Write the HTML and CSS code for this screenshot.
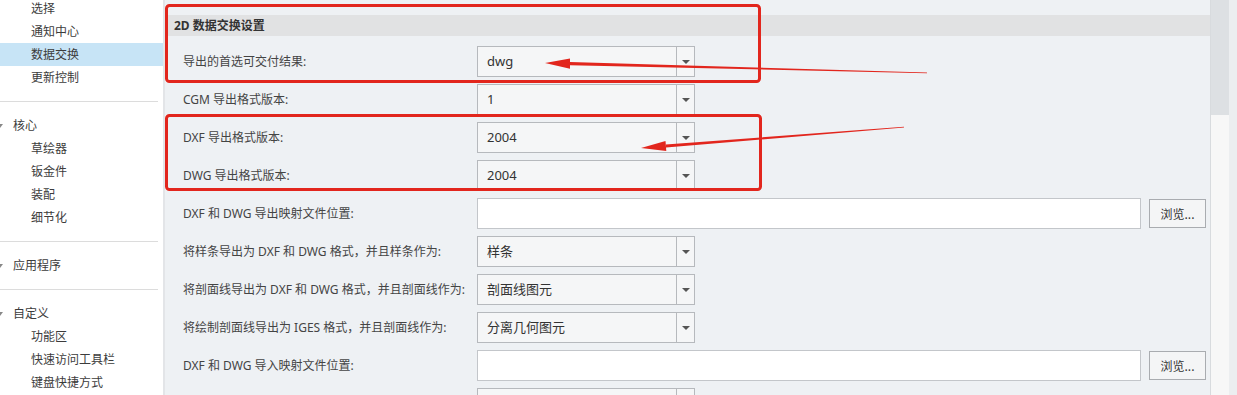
FILE: index.html
```html
<!DOCTYPE html>
<html lang="zh-CN">

<head>
    <meta charset="UTF-8">
    <title>选项 - 数据交换</title>
    <link rel="stylesheet" href="styles.css">
</head>

<body>
    <div class="wrapper">
        <div class="sidebar">
            <div class="group">
                <div class="item child">选择</div>
                <div class="item child">通知中心</div>
                <div class="item child active">数据交换</div>
                <div class="item child">更新控制</div>
            </div>
            <div class="sep"></div>
            <div class="group">
                <div class="item head">核心</div>
                <div class="item child">草绘器</div>
                <div class="item child">钣金件</div>
                <div class="item child">装配</div>
                <div class="item child">细节化</div>
            </div>
            <div class="sep"></div>
            <div class="group">
                <div class="item head">应用程序</div>
            </div>
            <div class="sep"></div>
            <div class="group">
                <div class="item head">自定义</div>
                <div class="item child">功能区</div>
                <div class="item child">快速访问工具栏</div>
                <div class="item child">键盘快捷方式</div>
            </div>
        </div>

        <div class="main">
            <div class="section-title">2D 数据交换设置</div>

            <div class="row">
                <div class="label">导出的首选可交付结果:</div>
                <div class="select"><span class="value">dwg</span><span class="arrow"></span></div>
            </div>
            <div class="row">
                <div class="label">CGM 导出格式版本:</div>
                <div class="select"><span class="value">1</span><span class="arrow"></span></div>
            </div>
            <div class="row">
                <div class="label">DXF 导出格式版本:</div>
                <div class="select"><span class="value">2004</span><span class="arrow"></span></div>
            </div>
            <div class="row">
                <div class="label">DWG 导出格式版本:</div>
                <div class="select"><span class="value">2004</span><span class="arrow"></span></div>
            </div>
            <div class="row">
                <div class="label">DXF 和 DWG 导出映射文件位置:</div>
                <div class="textbox"></div>
                <button class="browse">浏览...</button>
            </div>
            <div class="row">
                <div class="label">将样条导出为 DXF 和 DWG 格式，并且样条作为:</div>
                <div class="select"><span class="value">样条</span><span class="arrow"></span></div>
            </div>
            <div class="row">
                <div class="label">将剖面线导出为 DXF 和 DWG 格式，并且剖面线作为:</div>
                <div class="select"><span class="value">剖面线图元</span><span class="arrow"></span></div>
            </div>
            <div class="row">
                <div class="label">将绘制剖面线导出为 IGES 格式，并且剖面线作为:</div>
                <div class="select"><span class="value">分离几何图元</span><span class="arrow"></span></div>
            </div>
            <div class="row">
                <div class="label">DXF 和 DWG 导入映射文件位置:</div>
                <div class="textbox"></div>
                <button class="browse">浏览...</button>
            </div>
            <div class="row">
                <div class="label"></div>
                <div class="select"><span class="value"></span><span class="arrow"></span></div>
            </div>
        </div>

        <div class="scrollbar">
            <div class="thumb"></div>
        </div>
    </div>

    <svg class="marks" width="1237" height="395" viewBox="0 0 1237 395">
        <rect x="166.5" y="5.5" width="593" height="76" rx="3" fill="none" stroke="#e2261d" stroke-width="3" />
        <rect x="166.5" y="115.5" width="594" height="74" rx="3" fill="none" stroke="#e2261d" stroke-width="3" />
        <polygon points="927,72.6 927,73.3 570,65.2 570,62.1" fill="#e2261d" />
        <polygon points="545,63 570,58.6 570,68.7" fill="#e2261d" />
        <polygon points="904,126.8 904,127.4 666,147.6 665.8,144.4" fill="#e2261d" />
        <polygon points="641,148 665.5,141 666.3,151" fill="#e2261d" />
    </svg>
</body>

</html>
```

FILE: styles.css
```css
* {
    box-sizing: border-box;
    margin: 0;
    padding: 0;
}

body {
    width: 1237px;
    height: 395px;
    overflow: hidden;
    position: relative;
    font-family: "Noto Sans", "Noto Sans CJK SC", sans-serif;
    font-size: 12px;
    color: #3c3c3c;
}

.wrapper {
    display: flex;
    height: 100%;
}

.sidebar {
    width: 165px;
    flex: none;
    background: #fff;
    border-right: 2px solid #e3e5e8;
    margin-top: -3px;
}

.item {
    height: 23px;
    line-height: 23px;
    white-space: nowrap;
}

.child {
    padding-left: 31px;
}

.head {
    padding-left: 13px;
    position: relative;
}

.head::before {
    content: "";
    position: absolute;
    left: -3px;
    top: 10px;
    border-left: 3px solid transparent;
    border-right: 3px solid transparent;
    border-top: 4px solid #888;
}

.active {
    background: #c7e4f6;
}

.sep {
    height: 1px;
    margin: 12px 5px 12px 0;
    background: #dcdcdc;
}

.main {
    flex: 1;
    background: #eef1f4;
    padding-top: 15px;
}

.section-title {
    height: 21px;
    line-height: 21px;
    background: #e1e2e3;
    padding-left: 9px;
    font-weight: bold;
    color: #333;
    margin-bottom: 6px;
}

.row {
    display: flex;
    align-items: center;
    height: 38px;
}

.label {
    width: 312px;
    flex: none;
    padding-left: 18px;
    white-space: nowrap;
    color: #444;
}

.select {
    width: 218px;
    height: 31px;
    display: flex;
    background: #f5f6f7;
    border: 1px solid #b6b9bd;
}

.value {
    flex: 1;
    padding-left: 9px;
    line-height: 29px;
    font-size: 13px;
    color: #333;
}

.arrow {
    width: 18px;
    border-left: 1px solid #b6b9bd;
    position: relative;
}

.arrow::after {
    content: "";
    position: absolute;
    left: 5px;
    top: 13px;
    border-left: 4px solid transparent;
    border-right: 4px solid transparent;
    border-top: 4px solid #555;
}

.textbox {
    width: 664px;
    height: 31px;
    background: #fff;
    border: 1px solid #c3c6ca;
}

.browse {
    margin-left: 8px;
    width: 57px;
    height: 29px;
    background: #f4f5f6;
    border: 1px solid #a9acb0;
    font-family: "Noto Sans CJK SC", sans-serif;
    font-size: 12px;
    color: #333;
}

.scrollbar {
    width: 27px;
    flex: none;
    background: #f7f7f7;
    border-left: 1px solid #d8dbde;
    border-right: 8px solid #eceef0;
}

.thumb {
    height: 115px;
    background: #dde0e3;
}

.marks {
    position: absolute;
    left: 0;
    top: 0;
    pointer-events: none;
}
```
